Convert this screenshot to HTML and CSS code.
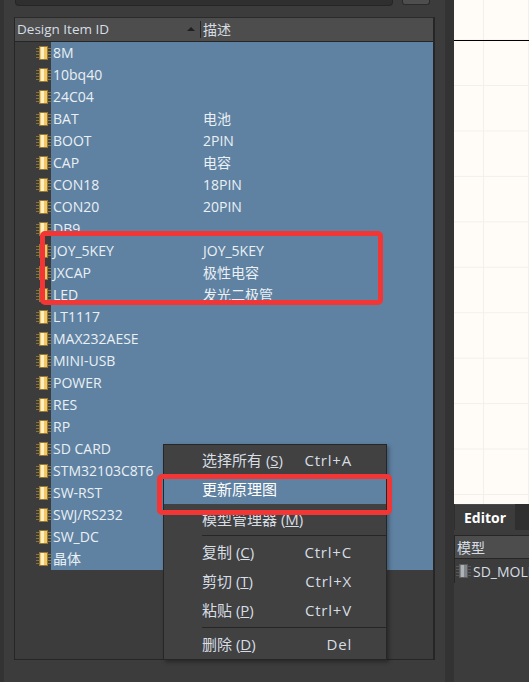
FILE: index.html
```html
<!doctype html>
<html lang="zh">
<head>
    <meta charset="UTF-8">
    <meta name="viewport" content="width=device-width, initial-scale=1.0">
    <title>Components</title>
    <link rel="stylesheet" href="styles.css">
</head>
<body>
    <svg class="defs" width="0" height="0">
        <symbol id="chip" viewBox="0 0 15 14">
            <path d="M0 2.5h15M0 5.5h15M0 8.5h15M0 11.5h15" stroke="currentColor" stroke-width="1" opacity=".9"/>
            <rect x="3.5" y=".5" width="8" height="13" fill="var(--chip-fill)" stroke="currentColor"/>
            <rect x="5" y="1" width="3" height="12" fill="var(--chip-light)"/>
        </symbol>
    </svg>

    <div class="left-dock">
        <div class="search-row">
            <div class="search-box"></div>
            <div class="search-btn"></div>
        </div>

        <div class="table">
            <div class="table-head">
                <div class="col-id">Design Item ID <span class="sort-arrow"></span></div>
                <div class="col-desc">描述</div>
            </div>
            <div class="table-rows">
                <div class="row"><svg class="chip"><use href="#chip"/></svg><span class="cell-id">8M</span><span class="cell-desc"></span></div>
                <div class="row"><svg class="chip"><use href="#chip"/></svg><span class="cell-id">10bq40</span><span class="cell-desc"></span></div>
                <div class="row"><svg class="chip"><use href="#chip"/></svg><span class="cell-id">24C04</span><span class="cell-desc"></span></div>
                <div class="row"><svg class="chip"><use href="#chip"/></svg><span class="cell-id">BAT</span><span class="cell-desc">电池</span></div>
                <div class="row"><svg class="chip"><use href="#chip"/></svg><span class="cell-id">BOOT</span><span class="cell-desc">2PIN</span></div>
                <div class="row"><svg class="chip"><use href="#chip"/></svg><span class="cell-id">CAP</span><span class="cell-desc">电容</span></div>
                <div class="row"><svg class="chip"><use href="#chip"/></svg><span class="cell-id">CON18</span><span class="cell-desc">18PIN</span></div>
                <div class="row"><svg class="chip"><use href="#chip"/></svg><span class="cell-id">CON20</span><span class="cell-desc">20PIN</span></div>
                <div class="row"><svg class="chip"><use href="#chip"/></svg><span class="cell-id">DB9</span><span class="cell-desc"></span></div>
                <div class="row"><svg class="chip"><use href="#chip"/></svg><span class="cell-id">JOY_5KEY</span><span class="cell-desc">JOY_5KEY</span></div>
                <div class="row"><svg class="chip"><use href="#chip"/></svg><span class="cell-id">JXCAP</span><span class="cell-desc">极性电容</span></div>
                <div class="row"><svg class="chip"><use href="#chip"/></svg><span class="cell-id">LED</span><span class="cell-desc">发光二极管</span></div>
                <div class="row"><svg class="chip"><use href="#chip"/></svg><span class="cell-id">LT1117</span><span class="cell-desc"></span></div>
                <div class="row"><svg class="chip"><use href="#chip"/></svg><span class="cell-id">MAX232AESE</span><span class="cell-desc"></span></div>
                <div class="row"><svg class="chip"><use href="#chip"/></svg><span class="cell-id">MINI-USB</span><span class="cell-desc"></span></div>
                <div class="row"><svg class="chip"><use href="#chip"/></svg><span class="cell-id">POWER</span><span class="cell-desc"></span></div>
                <div class="row"><svg class="chip"><use href="#chip"/></svg><span class="cell-id">RES</span><span class="cell-desc"></span></div>
                <div class="row"><svg class="chip"><use href="#chip"/></svg><span class="cell-id">RP</span><span class="cell-desc"></span></div>
                <div class="row"><svg class="chip"><use href="#chip"/></svg><span class="cell-id">SD CARD</span><span class="cell-desc"></span></div>
                <div class="row"><svg class="chip"><use href="#chip"/></svg><span class="cell-id">STM32103C8T6</span><span class="cell-desc"></span></div>
                <div class="row"><svg class="chip"><use href="#chip"/></svg><span class="cell-id">SW-RST</span><span class="cell-desc"></span></div>
                <div class="row"><svg class="chip"><use href="#chip"/></svg><span class="cell-id">SWJ/RS232</span><span class="cell-desc"></span></div>
                <div class="row"><svg class="chip"><use href="#chip"/></svg><span class="cell-id">SW_DC</span><span class="cell-desc"></span></div>
                <div class="row"><svg class="chip"><use href="#chip"/></svg><span class="cell-id">晶体</span><span class="cell-desc"></span></div>
            </div>
        </div>
    </div>

    <div class="right-dock">
        <div class="canvas">
            <div class="canvas-line"></div>
        </div>
        <div class="tabs">
            <div class="tab">Editor</div>
        </div>
        <div class="editor">
            <div class="editor-head">模型</div>
            <div class="editor-row"><svg class="chip chip-grey"><use href="#chip"/></svg><span>SD_MOLEX</span></div>
        </div>
    </div>

    <div class="menu">
        <div class="menu-item"><span class="menu-label">选择所有 (<u>S</u>)</span><span class="menu-key">Ctrl+A</span></div>
        <div class="menu-item menu-active"><span class="menu-label">更新原理图</span></div>
        <div class="menu-item"><span class="menu-label">模型管理器 (<u>M</u>)</span></div>
        <div class="menu-sep"></div>
        <div class="menu-item"><span class="menu-label">复制 (<u>C</u>)</span><span class="menu-key">Ctrl+C</span></div>
        <div class="menu-item"><span class="menu-label">剪切 (<u>T</u>)</span><span class="menu-key">Ctrl+X</span></div>
        <div class="menu-item"><span class="menu-label">粘贴 (<u>P</u>)</span><span class="menu-key">Ctrl+V</span></div>
        <div class="menu-sep menu-sep-low"></div>
        <div class="menu-item"><span class="menu-label">删除 (<u>D</u>)</span><span class="menu-key">Del</span></div>
    </div>

    <div class="mark mark-rows"></div>
    <div class="mark mark-item"></div>
</body>
</html>
```

FILE: styles.css
```css
* {
    box-sizing: border-box;
}

html, body {
    height: 100%;
}

body {
    margin: 0;
    display: flex;
    overflow: hidden;
    position: relative;
    background-color: #3c3c3c;
    color: #d6dde4;
    font-family: "Open Sans", "Noto Sans CJK SC", sans-serif;
    font-size: 14px;
}

.defs {
    position: absolute;
}

.left-dock {
    width: 454px;
    height: 682px;
    flex: none;
    border-left: 4px solid #333333;
    border-right: 9px solid #333333;
    padding-left: 10px;
    padding-right: 10px;
}

.search-row {
    display: flex;
    gap: 9px;
    height: 17px;
}

.search-box {
    width: 378px;
    height: 6px;
    margin-left: 1px;
    background-color: #2f2f2f;
    border: 1px solid #262626;
    border-top: 0;
    border-radius: 0 0 4px 4px;
}

.search-btn {
    width: 28px;
    height: 5px;
    background-color: #4e4e4e;
    border: 1px solid #2b2b2b;
    border-top: 0;
    border-radius: 0 0 3px 3px;
}

.table {
    width: 421px;
    height: 643px;
    border: 1px solid #262626;
    border-top-color: #2b2b2b;
    border-right-width: 2px;
}

.table-head {
    display: flex;
    height: 24px;
    background-color: #4d4d4d;
    border-bottom: 1px solid #262626;
    line-height: 24px;
}

.col-id {
    width: 186px;
    height: 17px;
    margin-top: 3px;
    padding-left: 2px;
    padding-right: 5px;
    padding-bottom: 1px;
    display: flex;
    justify-content: space-between;
    align-items: center;
    font-size: 13.5px;
    border-right: 1px solid #262626;
}

.sort-arrow {
    width: 0;
    height: 0;
    border-left: 4px solid transparent;
    border-right: 4px solid transparent;
    border-bottom: 4px solid #1f1f1f;
}

.col-desc {
    padding-left: 2px;
}

.row {
    display: flex;
    align-items: center;
    height: 22px;
    color: #eaf0f5;
}

.chip {
    width: 15px;
    height: 14px;
    flex: none;
    margin-left: 21px;
    color: #93793a;
    --chip-fill: #f3c766;
    --chip-light: #fdeec4;
}

.chip-grey {
    margin-left: 0;
    color: #5d5d5d;
    --chip-fill: #7f858b;
    --chip-light: #aeb3b8;
}

.cell-id {
    width: 152px;
    flex: none;
    height: 22px;
    padding-left: 2px;
    line-height: 22px;
    white-space: nowrap;
    background-color: #5f82a2;
}

.cell-desc {
    flex: 1;
    height: 22px;
    line-height: 22px;
    white-space: nowrap;
    background-color: #5f82a2;
}

.right-dock {
    flex: 1;
    display: flex;
    flex-direction: column;
    min-width: 0;
}

.canvas {
    height: 504px;
    padding-top: 40px;
    background-color: #fffcf7;
    background-image:
        linear-gradient(#f3f0eb 1px, transparent 1px),
        linear-gradient(90deg, #f3f0eb 1px, transparent 1px);
    background-size: 45px 45.44px;
    background-position: 0 39.6px, 29px 0;
}

.canvas-line {
    height: 1px;
    background-color: #000000;
}

.tabs {
    display: flex;
    height: 26px;
    padding-left: 1px;
    background-color: #2f2f2f;
}

.tab {
    width: 60px;
    background-color: #3c3c3c;
    color: #ffffff;
    font-weight: bold;
    line-height: 26px;
    text-align: center;
    border-top: 1px solid #4a4a4a;
}

.editor {
    margin-top: 5px;
    border-top: 1px solid #262626;
    border-left: 1px solid #262626;
}

.editor-head {
    height: 23px;
    padding-left: 2px;
    line-height: 23px;
    background-color: #4d4d4d;
    border-bottom: 1px solid #262626;
}

.editor-row {
    display: flex;
    align-items: center;
    gap: 2px;
    height: 24px;
    padding-left: 1px;
    white-space: nowrap;
    color: #d6dde4;
}

.menu {
    position: absolute;
    left: 163px;
    top: 444px;
    width: 224px;
    height: 216px;
    background-color: #414141;
    border: 1px solid #262626;
    box-shadow: 2px 2px 4px rgba(0, 0, 0, 0.35);
    font-size: 15px;
}

.menu-item {
    display: flex;
    justify-content: space-between;
    align-items: center;
    height: 29px;
    padding-left: 38px;
    padding-right: 34px;
    color: #d6dde4;
}

.menu-key {
    letter-spacing: 0.8px;
}

.menu-active {
    height: 30px;
    padding-bottom: 1px;
    background-color: #5f82a2;
    color: #ffffff;
}

.menu-sep {
    height: 1px;
    margin: 2px 0 1px 38px;
    background-color: #262626;
}

.menu-sep-low {
    margin-top: 3px;
}

.mark {
    position: absolute;
    border: 5px solid #f23636;
    border-radius: 5px;
}

.mark-rows {
    left: 40px;
    top: 231px;
    width: 343px;
    height: 74px;
}

.mark-item {
    left: 157px;
    top: 474px;
    width: 235px;
    height: 41px;
}
```
